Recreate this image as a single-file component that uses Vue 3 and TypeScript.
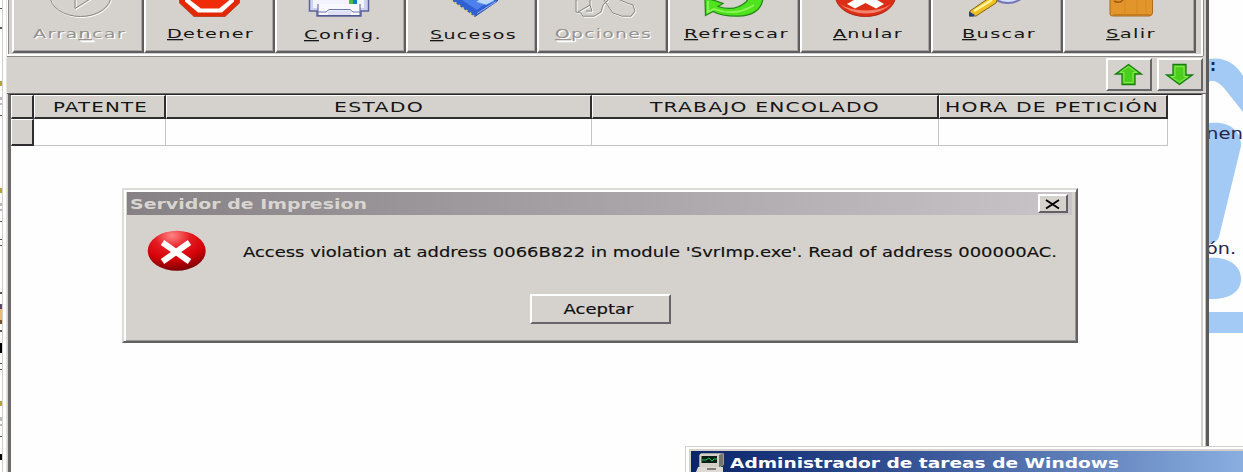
<script setup lang="ts">
interface ToolButton {
  id: string
  before: string
  key: string
  after: string
  left: number
  width: number
  textX: number
  textWidth: number
  baseline: number
  disabled?: boolean
}

interface Column {
  title: string
  left: number
  width: number
  textX: number
  textWidth: number
}

const buttons: ToolButton[] = [
  { id: 'start', before: 'Arra', key: 'n', after: 'car', left: 12, width: 132, textX: 33, textWidth: 93, baseline: 38, disabled: true },
  { id: 'stop', before: '', key: 'D', after: 'etener', left: 144, width: 131, textX: 167, textWidth: 87, baseline: 38 },
  { id: 'config', before: '', key: 'C', after: 'onfig.', left: 275, width: 131, textX: 304, textWidth: 78, baseline: 39 },
  { id: 'events', before: '', key: 'S', after: 'ucesos', left: 406, width: 131, textX: 430, textWidth: 87, baseline: 39 },
  { id: 'options', before: '', key: 'O', after: 'pciones', left: 537, width: 131, textX: 555, textWidth: 97, baseline: 38, disabled: true },
  { id: 'refresh', before: '', key: 'R', after: 'efrescar', left: 668, width: 132, textX: 684, textWidth: 105, baseline: 38 },
  { id: 'cancel', before: '', key: 'A', after: 'nular', left: 800, width: 131, textX: 833, textWidth: 70, baseline: 38 },
  { id: 'search', before: '', key: 'B', after: 'uscar', left: 931, width: 132, textX: 962, textWidth: 74, baseline: 38 },
  { id: 'exit', before: '', key: 'S', after: 'alir', left: 1063, width: 133, textX: 1106, textWidth: 50, baseline: 38 },
]

const columns: Column[] = [
  { title: 'PATENTE', left: 34, width: 132, textX: 53, textWidth: 95 },
  { title: 'ESTADO', left: 166, width: 426, textX: 334, textWidth: 90 },
  { title: 'TRABAJO ENCOLADO', left: 592, width: 347, textX: 650, textWidth: 230 },
  { title: 'HORA DE PETICIÓN', left: 939, width: 229, textX: 945, textWidth: 214 },
]

const optionsOutline =
  'M576 0V12L581 13L583 16.2H594L601 12L603 5L608 0M578 12L590 5L592 11L586 11M590 5V0M604 0L613 13L622 16.2H631L635 11L633 5L627 3L620 0'
</script>

<template>
  <div class="desktop">
    <svg class="backdrop" width="43" height="472" viewBox="1200 0 43 472">
      <g fill="#a3caf5">
        <path d="M1209 59C1225 56 1237 65 1243 76V112L1224 88Q1214 78 1209 82Z" />
        <path d="M1209 123C1225 121 1241 127 1241 146L1219 237Q1216 244 1209 244Z" />
        <path d="M1209 258C1227 256 1241 265 1241 279S1227 300 1209 299Z" />
        <path d="M1209 312H1243V333H1209Z" />
      </g>
      <text x="1210" y="71" font-size="15" font-weight="bold" fill="#142544">:</text>
      <text x="1206" y="139" font-size="15" textLength="37" lengthAdjust="spacingAndGlyphs" fill="#26244f">nen</text>
      <text x="1206" y="254" font-size="15" textLength="30" lengthAdjust="spacingAndGlyphs" fill="#26244f">ón.</text>
    </svg>

    <svg class="edge" width="7" height="472" viewBox="0 0 7 472">
      <path d="M2.5 0V472" stroke="#d2d0ca" />
      <path d="M0 8H2V9H0ZM0 27H2V29H0ZM0 115H2V116H0ZM0 221H2V222H0ZM0 239H2V240H0ZM0 245H2V246H0ZM0 292H2V294H0ZM0 330H2V332H0ZM0 363H2V364H0ZM0 369H2V370H0ZM0 436H2V437H0Z" fill="#555" />
      <path d="M0 97H2V100H0ZM0 103H2V105H0ZM0 203H2V206H0ZM0 209H2V211H0ZM0 417H2V421H0ZM0 424H2V426H0Z" fill="#bbb" />
      <path d="M0 81H2V86H0ZM0 188H2V193H0ZM0 401H2V406H0Z" fill="#b5a243" />
      <path d="M0 304H2V309H0Z" fill="#59466f" />
      <path d="M0 309H2V320H0Z" fill="#edba71" />
      <path d="M0 320H2V324H0Z" fill="#73502e" />
      <path d="M0 343H2V353H0ZM0 454H2V460H0Z" fill="#000" />
    </svg>

    <section class="server">
      <div class="toolbar">
        <button v-for="b in buttons" :key="b.id" class="tool" :class="{ disabled: b.disabled }" :style="{ width: b.width + 'px' }">
          <svg :width="b.width" height="53" :viewBox="`${b.left} 0 ${b.width} 53`">
            <g v-if="b.id === 'start'" fill="none">
              <g stroke="#fff" transform="translate(1 1)"><ellipse cx="80.5" cy="-4.5" rx="30.5" ry="21" /><path d="M75 -10V8.5L90 -1" /></g>
              <g stroke="#898783"><ellipse cx="80.5" cy="-4.5" rx="30.5" ry="21" /><path d="M75 -10V8.5L90 -1" /></g>
            </g>
            <g v-else-if="b.id === 'stop'">
              <path d="M179.5 -2H239.5V3L225 16.5H194L179.5 3Z" fill="#e32805" stroke="#b03a1c" stroke-width=".8" />
              <path d="M185 -2H234V1.500L222 12.5H198L185 1.500Z" fill="#fff" />
              <path d="M190.500 -2H229V.5L219 8.500H201L190.500 .5Z" fill="#f02c08" />
            </g>
            <g v-else-if="b.id === 'config'">
              <path d="M309.500 -2H368.500V11H361V16H317V11H309.500Z" fill="#cdd2ef" stroke="#5c639b" stroke-width="1.5" />
              <path d="M313 0H364V8H313Z" fill="#f2f3ff" />
              <path d="M349 0H353V4H349Z" fill="#4bbb43" /><path d="M353 0H357V4H353Z" fill="#1679c7" />
              <path d="M318 4V15.500H360V4" fill="#f8f8ff" stroke="#53598f" />
              <path d="M318 12H326L329 9.500H350L353 12H360" fill="none" stroke="#6e75a8" />
              <path d="M328 11.500L330 10.500H349L351 11.500V15H328Z" fill="#dfe2f6" />
            </g>
            <g v-else-if="b.id === 'events'">
              <path d="M449 -2L475 16.500L497.500 1V-2Z" fill="#2f5fd0" stroke="#294a9c" stroke-width=".8" />
              <path d="M459 -2L477 10L487 2L480 -2Z" fill="#4d80ed" />
              <path d="M476 2L481 -2H494V1L486 5Z" fill="#b9d8fb" stroke="#5384d3" stroke-width=".6" />
              <path d="M451 0L474 16" stroke="#ddd07a" stroke-width="2.200" stroke-dasharray="2 2.500" />
              <path d="M477 13.500L496 1.500" stroke="#8eb1ff" />
            </g>
            <g v-else-if="b.id === 'options'" fill="none" stroke-linejoin="round">
              <path :d="optionsOutline" stroke="#fff" transform="translate(1 1)" />
              <path :d="optionsOutline" stroke="#898783" />
            </g>
            <g v-else-if="b.id === 'refresh'">
              <path d="M705 -2L713 0L723 3.500L718 6.500Q735 12 746 2L749 -2H763Q761 15.500 738 16.200Q722 16.500 713 11.500L705.500 15.500Z" fill="#4fe31d" stroke="#238719" stroke-width="1.300" />
              <path d="M708 1V12L714 9Q736 17 754 5" fill="none" stroke="#8ef558" stroke-width="1.800" />
            </g>
            <g v-else-if="b.id === 'cancel'">
              <ellipse cx="865.500" cy="-4" rx="30" ry="20.500" fill="#dc2e14" stroke="#b02718" />
              <path d="M840 4Q850 13.500 866 13.500T891 4Q882 10.500 866 10.500T840 4" fill="#f4826f" />
              <path d="M847 4L859 -3H872L884 4L876 8.500L865.500 3L855 8.500Z" fill="#fff" />
            </g>
            <g v-else-if="b.id === 'search'">
              <ellipse cx="1008" cy="-7.500" rx="16" ry="10.500" fill="#d1dffc" stroke="#7475b4" stroke-width="2" />
              <path d="M970 11L989 -2H998L996 3L976 16H970Z" fill="#f0bf20" stroke="#80651d" />
              <path d="M974 11L992 0" stroke="#fff5a0" stroke-width="2.500" /><path d="M969 11.500L975 15L973 16.500H969Z" fill="#253d80" />
            </g>
            <g v-else>
              <path d="M1110 -2H1152.500V13Q1152 16 1149 16H1113Q1110 16 1110 14Z" fill="#e2952a" stroke="#ab6b1d" />
              <path d="M1125 -1V14M1137 -1V14M1146 -1V14" stroke="#d98821" />
              <path d="M1113 14.800H1150" stroke="#bb7118" />
              <path d="M1114 1Q1119 4 1123 0" fill="none" stroke="#a05c13" stroke-width="1.500" />
            </g>
            <text :x="b.textX" :y="b.baseline" :textLength="b.textWidth" lengthAdjust="spacingAndGlyphs">{{ b.before }}<tspan class="key">{{ b.key }}</tspan>{{ b.after }}</text>
          </svg>
        </button>
      </div>

      <div class="strip">
        <button class="arrow">
          <svg width="46" height="33" viewBox="0 0 46 33"><path d="M22.500 6.500L35.500 16H29V26.500H16V16H9.500Z" fill="#4ccf1c" stroke="#187c13" stroke-width="1.300" /><path d="M22.500 8.500L31 14.500H27V24.500H18V14.500H14Z" fill="none" stroke="#86ea4f" /></svg>
        </button>
        <button class="arrow">
          <svg width="46" height="33" viewBox="0 0 46 33"><path d="M22.500 26.500L9.500 17H16V6.500H29V17H35.500Z" fill="#4ccf1c" stroke="#187c13" stroke-width="1.300" /><path d="M22.500 24L14 18.500H18V8.500H27V18.500H31Z" fill="none" stroke="#86ea4f" /></svg>
        </button>
      </div>

      <div class="grid">
        <div class="row head">
          <div class="cell marker"></div>
          <div v-for="c in columns" :key="c.title" class="cell" :style="{ width: c.width + 'px' }">
            <svg :width="c.width - 4" height="21" :viewBox="`${c.left + 1} 96 ${c.width - 4} 21`">
              <text :x="c.textX" y="112" :textLength="c.textWidth" lengthAdjust="spacingAndGlyphs">{{ c.title }}</text>
            </svg>
          </div>
        </div>
        <div class="row body">
          <div class="cell marker"></div>
          <div v-for="c in columns" :key="c.title" class="cell" :style="{ width: c.width + 'px' }"></div>
        </div>
      </div>
    </section>

    <section class="dialog">
      <header class="caption">
        <svg width="400" height="23" viewBox="127 192 400 23">
          <text class="title" x="130" y="208.500" textLength="237" lengthAdjust="spacingAndGlyphs">Servidor de Impresion</text>
        </svg>
        <button class="close">
          <svg width="25" height="14" viewBox="0 0 25 14"><path d="M6 3L19 11.500M19 3L6 11.500" stroke="#000" stroke-width="2" /></svg>
        </button>
      </header>
      <div class="message">
        <svg width="945" height="79" viewBox="127 215 945 79">
          <defs>
            <radialGradient id="errorFill" cx=".42" cy=".12" r=".9">
              <stop offset="0" stop-color="#ff8585" />
              <stop offset=".35" stop-color="#e51c22" />
              <stop offset=".65" stop-color="#d50309" />
              <stop offset="1" stop-color="#760006" />
            </radialGradient>
          </defs>
          <ellipse cx="176.700" cy="250.800" rx="29" ry="20" fill="url(#errorFill)" />
          <path d="M162.500 242.500L189.500 261.500M189.500 242.500L162.500 261.500" stroke="#fff" stroke-width="6" />
          <text x="243" y="256.500" textLength="814" lengthAdjust="spacingAndGlyphs">Access violation at address 0066B822 in module 'SvrImp.exe'. Read of address 000000AC.</text>
        </svg>
      </div>
      <button class="accept">
        <svg width="137" height="26" viewBox="532 296 137 26"><text x="563.500" y="314" textLength="70" lengthAdjust="spacingAndGlyphs">Aceptar</text></svg>
      </button>
    </section>

    <section class="tasks">
      <header>
        <svg width="552" height="21" viewBox="691 451 552 21">
          <path d="M701 453H724V465L719 468H699V455Z" fill="#d4d0c8" stroke="#1b2b58" stroke-width=".6" />
          <path d="M719 455L723 453V465L719 467Z" fill="#77736d" />
          <path d="M701.500 456H717V463H701.500Z" fill="#052016" />
          <path d="M702 460H706L709 458L712 461L714 459H717" fill="none" stroke="#20c55c" />
          <path d="M698 467H723V472H696Z" fill="#dedbd4" /><path d="M707 469H716" stroke="#222" />
          <text class="title" x="730" y="468" textLength="389" lengthAdjust="spacingAndGlyphs">Administrador de tareas de Windows</text>
        </svg>
      </header>
    </section>
  </div>
</template>

<style>
html, body { margin: 0; overflow: hidden; }
</style>

<style scoped>
.desktop {
  position: relative;
  width: 1243px;
  height: 472px;
  overflow: hidden;
  background: #fefefe;
  font-family: "DejaVu Sans", sans-serif;
}
.desktop * { box-sizing: border-box; }
svg { display: block; }
text { font-family: "DejaVu Sans", sans-serif; white-space: pre; }
button { padding: 0; margin: 0; border-radius: 0; background: #d5d2cd; flex: none; }
.backdrop { position: absolute; left: 1200px; top: 0; }
.edge { position: absolute; left: 0; top: 0; }

.server {
  position: absolute;
  left: 6px;
  top: 0;
  width: 1203px;
  height: 472px;
  background: #d5d2cd;
  border-left: 1px solid #e6e4e0;
  border-right: 3px solid #5c5b5d;
}
.toolbar {
  display: flex;
  height: 56px;
  width: 1196px;
  padding-left: 2px;
  border-left: 1px solid #fff;
  border-right: 2px solid #fff;
  border-bottom: 2px solid #fff;
  box-shadow: inset 1px 0 #8c8988, 0 1px #8c8988, 1px 0 #8c8988;
}
.tool {
  height: 53px;
  border: solid;
  border-width: 0 2px 2px 2px;
  border-color: #fff #605d60 #605d60 #fff;
  box-shadow: inset -1px -1px #aaa6a3;
  overflow: hidden;
}
.tool:first-child { margin-left: 2px; }
.tool svg { margin-left: -2px; }
.tool text { font-size: 13px; letter-spacing: .9px; fill: #171717; }
.tool.disabled text { fill: #969390; text-shadow: 1px 1px #fff; }
.key { text-decoration: underline; text-decoration-thickness: 1px; text-underline-offset: 1px; }

.strip {
  display: flex;
  justify-content: flex-end;
  gap: 5px;
  height: 38px;
  padding: 2px 3px 3px 0;
  border-bottom: 1px solid #6d696b;
}
.arrow {
  width: 46px;
  height: 33px;
  border: 2px solid;
  border-color: #fff #69666a #69666a #fff;
}
.arrow svg { margin: -2px; }

.grid {
  height: 378px;
  width: 1195px;
  margin-left: 1px;
  background: #fefefe;
  border-left: 3px solid #6b696a;
  border-right: 2px solid #d4d1cc;
  border-top: 1px solid #292728;
  box-shadow: 2px 0 #fff, 3px 0 #c5c2be;
}
.row { display: flex; }
.cell { flex: none; }
.head .cell {
  height: 24px;
  background: #d5d2cd;
  border: solid;
  border-width: 1px 2px 2px 1px;
  border-color: #fff #302d30 #302d30 #fff;
}
.head text { font-size: 13.400px; letter-spacing: .8px; fill: #151515; }
.body .cell { height: 27px; border-right: 1px solid #c5c4c2; border-bottom: 1px solid #c5c4c2; }
.row .marker { width: 23px; }
.body .marker {
  background: #d5d2cd;
  border: solid;
  border-width: 1px 2px 2px 1px;
  border-color: #fff #302d30 #302d30 #fff;
}

.dialog {
  position: absolute;
  left: 122px;
  top: 188px;
  width: 956px;
  height: 155px;
  padding: 2px 1px 0 2px;
  background: #d5d2cd;
  border: 2px solid;
  border-color: #dedcd7 #626064 #626064 #dedcd7;
  box-shadow: inset 2px 2px #fff, inset -1px -1px #999696;
}
.dialog .caption {
  display: flex;
  justify-content: space-between;
  align-items: center;
  height: 23px;
  width: 945px;
  margin-left: 1px;
  padding-right: 4px;
  background: linear-gradient(90deg, #858185, #c8c4c7);
}
.caption .title { font-size: 13.600px; font-weight: bold; fill: #d8d5d0; }
.close {
  width: 30px;
  height: 19px;
  border: 2px solid;
  border-color: #fff #626064 #626064 #fff;
}
.message { margin-left: 1px; }
.message text { font-size: 13.800px; fill: #111; stroke: #111; stroke-width: .15px; }
.accept {
  display: block;
  width: 141px;
  height: 30px;
  margin-left: 404px;
  border: 2px solid;
  border-color: #fff #68656a #68656a #fff;
}
.accept text { font-size: 13.500px; fill: #111; stroke: #111; stroke-width: .15px; }

.tasks {
  position: absolute;
  left: 685px;
  top: 446px;
  width: 558px;
  height: 26px;
  padding: 2px 0 0 3px;
  border-left: 1px solid #d5d2cd;
  border-top: 1px solid #d5d2cd;
  background: #fff;
}
.tasks header {
  border-left: 2px solid #d5d2cd;
  border-top: 2px solid #d5d2cd;
  background: linear-gradient(90deg, #0a246a, #355395 40%, #8aaee0);
}
.tasks .title { font-size: 14px; font-weight: bold; fill: #fff; }
</style>
